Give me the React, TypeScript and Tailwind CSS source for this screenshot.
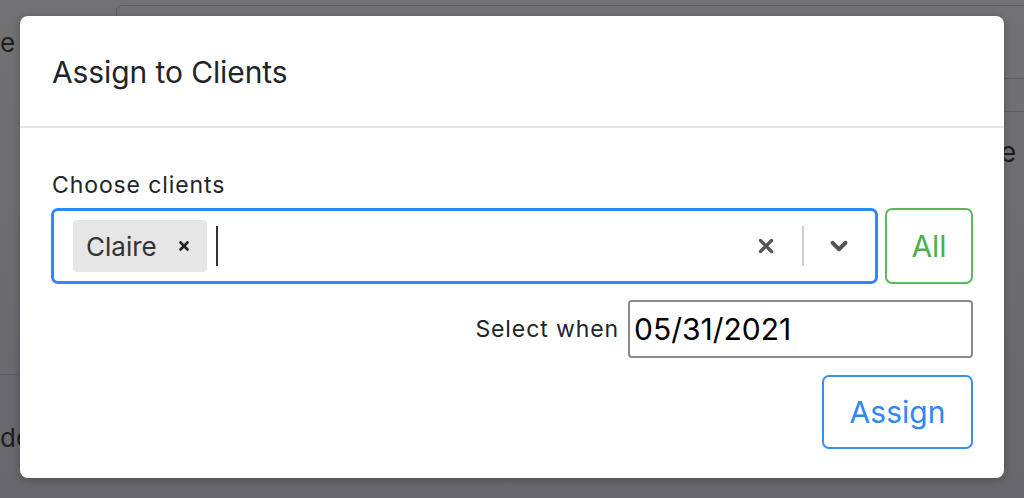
import { X, ChevronDown } from "lucide-react";

export default function App() {
  return (
    <div
      className="relative w-[1024px] h-[498px] overflow-hidden bg-gradient-to-b from-[#727274] to-[#68686c]"
      style={{ fontFamily: "Inter, 'Noto Sans', sans-serif" }}
    >
      {/* dimmed page behind the modal */}
      <div className="flex h-full">
        <div className="w-[116px] shrink-0 flex flex-col">
          <div className="h-[28px]" />
          <div className="text-[26px] leading-[30px] text-[#1e1e20] -ml-[16px]">de</div>
          <div className="h-[317px] border-b border-[#5e5e62]" />
          <div className="mt-[48px] text-[26px] leading-[30px] text-[#1e1e20]">do</div>
        </div>
        <div className="flex-1 flex flex-col pt-[5px]">
          <div className="h-[120px] rounded-tl-[6px] border-l border-t border-[#5e5e62] flex flex-col items-end">
            <div className="h-[72px]" />
            <div className="w-[20px] h-[34px] border-t border-b border-[#5e5e62]" />
          </div>
          <div className="flex justify-end">
            <div className="w-[20px] overflow-hidden text-[28px] leading-[30px] text-[#1e1e20] mt-[12px]">
              <span className="-ml-[4px]">e</span>
            </div>
          </div>
        </div>
      </div>

      {/* modal */}
      <div className="absolute left-[20px] top-[16px] w-[984px] h-[462px] bg-white rounded-[8px] shadow-[0_2px_8px_rgba(0,0,0,0.25)] flex flex-col">
        <div className="h-[112px] px-[32px] flex items-center border-b-2 border-[#e4e6e9]">
          <h2 className="text-[30px] text-[#212529] tracking-[-0.1px] mt-[2px]">Assign to Clients</h2>
        </div>
        <div className="flex flex-col px-[31px] pt-[44px]">
          <label className="text-[23px] leading-[26px] text-[#212529] mb-[10px] pl-[1px] tracking-[0.9px]">
            Choose clients
          </label>
          <div className="flex gap-[7px]">
            <div className="flex-1 h-[76px] rounded-[7px] border-[3px] border-[#2f86f6] flex items-center pl-[19px] pr-[23px]">
              <div className="flex items-center h-[52px] bg-[#e6e6e6] rounded-[4px] pl-[13px] pr-[16px]">
                <span className="text-[26px] text-[#333333]">Claire</span>
                <X className="ml-[20px] w-[14px] h-[14px] text-[#222]" strokeWidth={4.5} />
              </div>
              <div className="ml-[9px] w-[2px] h-[40px] bg-[#333]" />
              <div className="flex-1" />
              <X className="w-[22px] h-[22px] text-[#555]" strokeWidth={3.6} />
              <div className="ml-[25px] mr-[22px] w-[2px] h-[40px] bg-[#d0d0d0]" />
              <ChevronDown className="w-[26px] h-[26px] text-[#555]" strokeWidth={3.6} />
            </div>
            <button className="w-[88px] h-[76px] rounded-[7px] border-2 border-[#5cb85c] text-[#4caf50] text-[30px]">
              All
            </button>
          </div>
          <div className="flex justify-end items-center mt-[16px] gap-[9px]">
            <span className="text-[23px] text-[#212529] tracking-[0.9px]">Select when</span>
            <div className="w-[345px] h-[58px] border-2 border-[#8a8a8a] rounded-[4px] flex items-center px-[4px]">
              <span className="text-[30px] text-black">05/31/2021</span>
            </div>
          </div>
          <div className="flex justify-end mt-[17px]">
            <button className="w-[151px] h-[74px] rounded-[7px] border-2 border-[#3b8cf5] text-[#2f86f6] text-[30px]">
              Assign
            </button>
          </div>
        </div>
      </div>
    </div>
  );
}
